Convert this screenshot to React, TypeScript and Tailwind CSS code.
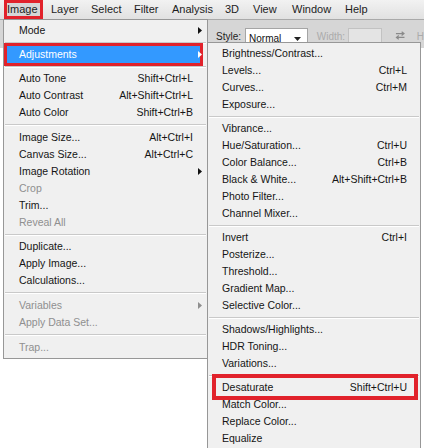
import React from "react";

type Item =
  | { sep: number }
  | { label: string; keys?: string; sub?: boolean; off?: boolean; hot?: boolean; boxed?: boolean };

const imageMenu: Item[] = [
  { label: "Mode", sub: true },
  { sep: 7 },
  { label: "Adjustments", sub: true, hot: true, boxed: true },
  { sep: 7 },
  { label: "Auto Tone", keys: "Shift+Ctrl+L" },
  { label: "Auto Contrast", keys: "Alt+Shift+Ctrl+L" },
  { label: "Auto Color", keys: "Shift+Ctrl+B" },
  { sep: 8 },
  { label: "Image Size...", keys: "Alt+Ctrl+I" },
  { label: "Canvas Size...", keys: "Alt+Ctrl+C" },
  { label: "Image Rotation", sub: true },
  { label: "Crop", off: true },
  { label: "Trim..." },
  { label: "Reveal All", off: true },
  { sep: 7 },
  { label: "Duplicate..." },
  { label: "Apply Image..." },
  { label: "Calculations..." },
  { sep: 8 },
  { label: "Variables", sub: true, off: true },
  { label: "Apply Data Set...", off: true },
  { sep: 8 },
  { label: "Trap...", off: true },
];

const adjustMenu: Item[] = [
  { label: "Brightness/Contrast..." },
  { label: "Levels...", keys: "Ctrl+L" },
  { label: "Curves...", keys: "Ctrl+M" },
  { label: "Exposure..." },
  { sep: 7 },
  { label: "Vibrance..." },
  { label: "Hue/Saturation...", keys: "Ctrl+U" },
  { label: "Color Balance...", keys: "Ctrl+B" },
  { label: "Black & White...", keys: "Alt+Shift+Ctrl+B" },
  { label: "Photo Filter..." },
  { label: "Channel Mixer..." },
  { sep: 7 },
  { label: "Invert", keys: "Ctrl+I" },
  { label: "Posterize..." },
  { label: "Threshold..." },
  { label: "Gradient Map..." },
  { label: "Selective Color..." },
  { sep: 7 },
  { label: "Shadows/Highlights..." },
  { label: "HDR Toning..." },
  { label: "Variations..." },
  { sep: 7 },
  { label: "Desaturate", keys: "Shift+Ctrl+U", boxed: true },
  { label: "Match Color..." },
  { label: "Replace Color..." },
  { label: "Equalize" },
];

const bar = [
  { t: "Image", w: "w-[44px]" },
  { t: "Layer", w: "w-[40px]" },
  { t: "Select", w: "w-[43px]" },
  { t: "Filter", w: "w-[38px]" },
  { t: "Analysis", w: "w-[53px]" },
  { t: "3D", w: "w-[28px]" },
  { t: "View", w: "w-[39px]" },
  { t: "Window", w: "w-[53px]" },
  { t: "Help", w: "w-[40px]" },
];

function Arrow({ color }: { color: string }) {
  return (
    <svg width="4" height="7" viewBox="0 0 4 7" className="absolute right-[5px] top-[5px]">
      <path d="M0 0 L4 3.5 L0 7 Z" fill={color} />
    </svg>
  );
}

function Menu({ items, right, wide }: { items: Item[]; right: string; wide?: boolean }) {
  return (
    <>
      {items.map((it, i) => {
        if ("sep" in it) {
          return (
            <div key={i} className={`flex flex-col justify-center px-[1px] ${it.sep === 8 ? "h-[8px]" : "h-[7px]"}`}>
              <div className="h-px bg-[#c9c9c9]" />
              <div className="h-px bg-white" />
            </div>
          );
        }
        const color = it.hot ? "text-white" : it.off ? "text-[#8f8f8f]" : "text-[#151515]";
        return (
          <div key={i} className={`relative flex items-center h-[17px] ${wide ? "pl-[14px]" : "pl-[15px]"} ${right}`}>
            {it.boxed && it.hot && (
              <div className="absolute left-0 right-[4px] -top-[3px] -bottom-[3px] border-[3px] border-[#e1222b] bg-[#3399ff]" />
            )}
            {it.boxed && !it.hot && (
              <div className="absolute left-[4px] right-[2px] -top-[5px] -bottom-[4px] border-[4px] border-[#e1222b]" />
            )}
            <span className={`relative flex-1 ${color}`}>{it.label}</span>
            {it.keys && <span className={`relative ${color}`}>{it.keys}</span>}
            {it.sub && <Arrow color={it.hot ? "#ffffff" : it.off ? "#8f8f8f" : "#111111"} />}
          </div>
        );
      })}
    </>
  );
}

export default function App() {
  return (
    <div className="relative w-[424px] h-[448px] overflow-hidden bg-white font-['Liberation_Sans',Arial,sans-serif]">
      {/* menu bar */}
      <div className="flex h-[20px] pl-[7px] bg-gradient-to-b from-[#f2f2f2] to-[#e1e1e1] border-b border-[#a9a9a9] text-[11px] text-[#1c1c1c]">
        {bar.map((b, i) => (
          <div key={b.t} className={`relative flex items-center shrink-0 h-[19px] ${b.w}`}>
            {i === 0 && <div className="absolute -left-[3px] top-0 w-[39px] h-[19px] border-[3px] border-[#e1222b] bg-[#d6d6d6]" />}
            <span className="relative">{b.t}</span>
          </div>
        ))}
      </div>

      {/* options bar */}
      <div className="flex items-start h-[28px] pt-[8px] pl-[216px] bg-[#d6d6d6] text-[10px]">
        <span className="text-[#1e1e1e] mt-[1px]">Style:</span>
        <div className="relative ml-[4px] w-[66px] h-[16px] bg-white border border-[#a5a5a5] pl-[3px] pt-[2px] text-[#111]">
          Normal
          <svg width="7" height="4" viewBox="0 0 7 4" className="absolute right-[6px] top-[8px]">
            <path d="M0 0 H7 L3.5 4 Z" fill="#222" />
          </svg>
        </div>
        <span className="ml-[9px] mt-[1px] text-[#ababab]">Width:</span>
        <div className="ml-[3px] w-[36px] h-[15px] bg-[#e4e4e4] border border-[#c2c2c2]" />
        <svg width="11" height="9" viewBox="0 0 11 9" className="ml-[13px] mt-[3px]">
          <path d="M1 2.5 H9 M7 0.5 L9.5 2.5 L7 4.5 M10 6.5 H2 M4 4.5 L1.5 6.5 L4 8.5" stroke="#8a8a8a" strokeWidth="1.2" fill="none" />
        </svg>
        <span className="ml-[11px] mt-[1px] text-[#ababab]">H</span>
      </div>

      {/* Image menu */}
      <div className="absolute left-[3px] top-[19px] w-[205px] bg-[#f0f0f0] border border-[#979797] pt-[2px] pb-[2px] text-[10.5px]">
        <Menu items={imageMenu} right="pr-[14px]" />
      </div>

      {/* Adjustments submenu */}
      <div className="absolute left-[207px] top-[42px] w-[214px] h-[420px] bg-[#f0f0f0] border border-[#979797] pt-[2px] text-[10.5px]">
        <Menu items={adjustMenu} right="pr-[13px]" wide />
      </div>
    </div>
  );
}
